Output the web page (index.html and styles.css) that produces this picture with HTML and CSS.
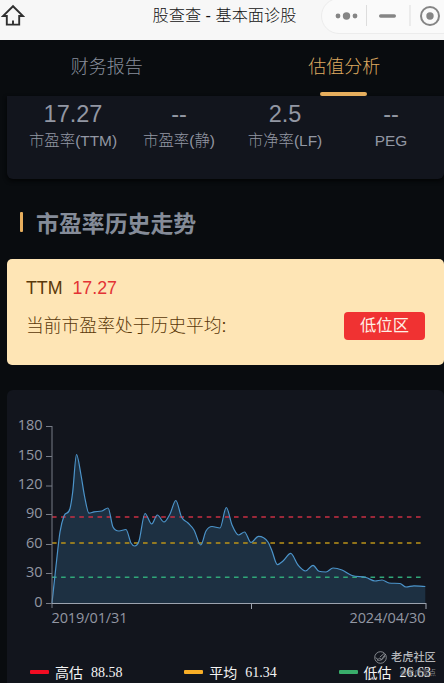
FILE: index.html
```
<!DOCTYPE html>
<html lang="zh-CN">
<head>
    <meta charset="UTF-8">
    <meta name="viewport" content="width=device-width, initial-scale=1.0">
    <title>股查查 - 基本面诊股</title>
    <link rel="stylesheet" href="styles.css">
</head>
<body>
    <header class="topbar">
        <svg class="home" width="24" height="24" viewBox="0 0 24 24">
            <path d="M12 2.2 L2 12 H5.8 V20.6 H18.2 V12 H22 Z M12 16.5 V20.5" />
        </svg>
        <h1>股查查 - 基本面诊股</h1>
        <div class="capsule">
            <svg width="122" height="36" viewBox="0 0 122 36">
                <g class="dots">
                    <circle cx="17" cy="17" r="2.4" />
                    <circle cx="25.5" cy="17" r="3.7" />
                    <circle cx="34" cy="17" r="2.4" />
                    <rect x="58" y="15.3" width="17" height="3.4" rx="1.7" />
                    <circle cx="109" cy="17" r="3.7" />
                </g>
                <path class="split" d="M45.5 6 V27 M89 6 V27" />
                <circle class="ring" cx="109" cy="17" r="9" />
            </svg>
        </div>
    </header>

    <nav class="tabs">
        <a href="#">财务报告</a>
        <a href="#" class="active">估值分析</a>
    </nav>

    <main>
        <section class="card stats">
            <div class="stat"><strong>17.27</strong><span>市盈率(TTM)</span></div>
            <div class="stat"><strong>--</strong><span>市盈率(静)</span></div>
            <div class="stat"><strong>2.5</strong><span>市净率(LF)</span></div>
            <div class="stat"><strong>--</strong><span>PEG</span></div>
        </section>

        <h2>市盈率历史走势</h2>

        <section class="notice">
            <p>TTM <span class="red">17.27</span></p>
            <div class="notice-row">
                <p>当前市盈率处于历史平均:</p>
                <span class="tag">低位区</span>
            </div>
        </section>

        <section class="card chart-card">
            <svg class="chart" width="437" height="250" viewBox="7 390 437 250">
                <path id="area" class="area" />
                <path class="high" d="M52 517 H425" />
                <path class="avg" d="M52 543 H425" />
                <path class="low" d="M52 577.2 H425" />
                <path id="line" class="line" />
                <path class="axis-y" d="M52 426 V608 M46 426.5 H52 M46 456.5 H52 M46 486 H52 M46 514.5 H52 M46 544.5 H52 M46 573.5 H52 M46 603.5 H52" />
                <path class="axis-x" d="M52 603.5 H426 M251.5 603 V609 M426 603 V609" />
                <g id="labels" class="labels"></g>
                <text class="date" x="51.5" y="623" textLength="76">2019/01/31</text>
                <text class="date" x="349.5" y="623" textLength="76">2024/04/30</text>
            </svg>
            <div class="legend">
                <div><i class="bar bar-high"></i>高估<b>88.58</b></div>
                <div><i class="bar bar-avg"></i>平均<b>61.34</b></div>
                <div><i class="bar bar-low"></i>低估<b>26.63</b></div>
            </div>
            <div class="watermark">
                <svg width="13" height="13" viewBox="0 0 13 13">
                    <circle cx="6.5" cy="6.5" r="5.8" />
                    <path d="M1.5 6.5 L4 8.5 L5.5 7 L7.5 8.5 L11.5 3 M3 9 Q8 10.5 11 5 M6 6 L10 2.5" />
                </svg>
                <span>老虎社区</span>
                <small>@老虎观点</small>
            </div>
        </section>
    </main>

    <script src="script.js"></script>
</body>
</html>
```
FILE: styles.css
```
* {
    box-sizing: border-box;
}

body {
    margin: 0;
    height: 683px;
    overflow: hidden;
    background: #090c0f;
    color: #9297a3;
    font-family: "Liberation Sans", "Noto Sans CJK SC", sans-serif;
    font-weight: 300;
}

h1, h2, p {
    margin: 0;
}

.topbar {
    position: relative;
    height: 40px;
    background: #f7f7f7;
    color: #111;
}

.home {
    position: absolute;
    left: 1px;
    top: 4px;
    fill: none;
    stroke: #303030;
    stroke-width: 1.9;
}

.topbar h1 {
    padding-left: 5px;
    font-size: 16.2px;
    font-weight: 300;
    line-height: 31px;
    text-align: center;
}

.capsule {
    position: absolute;
    left: 321px;
    top: -2px;
    width: 140px;
    height: 36px;
    border: 1px solid #ececec;
    border-radius: 18px;
    background: #fafafa;
}

.capsule svg {
    display: block;
    margin-left: -1px;
}

.dots {
    fill: #858585;
}

.split {
    stroke: #dddddd;
}

.ring {
    fill: none;
    stroke: #858585;
    stroke-width: 2;
}

.tabs {
    display: flex;
    height: 56px;
    margin: 0 -19px 0 -12px;
}

.tabs a {
    position: relative;
    flex: 1;
    color: #878e9b;
    font-size: 18px;
    line-height: 55px;
    text-align: center;
    text-decoration: none;
}

.tabs .active {
    color: #dfaa61;
}

.tabs .active::after {
    content: "";
    position: absolute;
    left: 50%;
    bottom: 0;
    width: 47px;
    height: 4px;
    margin-left: -24px;
    border-radius: 2px;
    background: #e6ae5d;
}

main {
    padding-left: 7px;
}

.card {
    background: #12151d;
    border-radius: 6px;
}

.stats {
    display: flex;
    height: 83px;
    padding: 5px 0 0 13px;
    border-radius: 0 0 6px 6px;
    box-shadow: 0 2px 4px #030405;
}

.stat {
    width: 106px;
    text-align: center;
}

.stat strong {
    display: block;
    font-size: 23.5px;
    font-weight: 400;
    line-height: 26px;
}

.stat span {
    display: block;
    font-size: 15.4px;
    line-height: 28px;
    white-space: nowrap;
}

h2 {
    display: flex;
    align-items: center;
    height: 80px;
    padding: 5px 0 0 13px;
    font-size: 22.9px;
    font-weight: 700;
    color: #858c99;
}

h2::before {
    content: "";
    width: 3px;
    height: 20px;
    margin-right: 13px;
    border-radius: 1px;
    background: #e6ae5d;
}

.notice {
    height: 106px;
    padding: 14px 19px;
    border-radius: 5px;
    background: #fee5b5;
    color: #5a3809;
    font-size: 17.8px;
    line-height: 30px;
}

.red {
    margin-left: 5px;
    color: #e33334;
}

.notice-row {
    display: flex;
    justify-content: space-between;
    align-items: center;
    margin-top: 8px;
}

.tag {
    width: 81px;
    height: 28px;
    border-radius: 4px;
    background: #f03232;
    color: #fff0e6;
    font-size: 16.3px;
    font-weight: 400;
    line-height: 27px;
    text-align: center;
}

.chart-card {
    position: relative;
    height: 310px;
    margin-top: 25px;
}

.chart {
    display: block;
}

.area {
    fill: #1d3042;
}

.line {
    fill: none;
    stroke: #4c94ca;
    stroke-width: 1.2;
}

.high, .avg, .low {
    stroke-width: 1.4;
    stroke-dasharray: 4.6 4.5;
}

.high {
    stroke: #c92f43;
}

.avg {
    stroke: #bb9218;
}

.low {
    stroke: #30a779;
}

.axis-y, .axis-x {
    fill: none;
    stroke: #777c87;
}

.axis-x {
    stroke: #9ca3af;
}

.labels, .date {
    fill: #9297a3;
    font-family: "Open Sans", "Noto Sans", sans-serif;
    font-size: 14.5px;
    font-weight: 400;
}

.labels {
    text-anchor: end;
}

.legend {
    display: flex;
    justify-content: space-between;
    padding: 22px 13px 0 23px;
    color: #f4f4f4;
    font-size: 14px;
    font-weight: 400;
    line-height: 22px;
}

.legend div {
    display: flex;
    align-items: center;
}

.legend b {
    margin-left: 8px;
    font-family: "Liberation Serif", serif;
    font-weight: 400;
}

.bar {
    width: 19px;
    height: 4px;
    margin: -2px 6px 0 0;
    border-radius: 1px;
}

.bar-high {
    background: #f20c22;
}

.bar-avg {
    background: #f8ae27;
}

.bar-low {
    background: #39ad6b;
}

/* community mark over the legend */
.watermark {
    position: absolute;
    right: 8px;
    top: 260px;
    display: grid;
    grid-template-columns: 13px 45px;
    column-gap: 4px;
    align-items: center;
    color: #b5b7bb;
    font-size: 11.2px;
    font-weight: 500;
    line-height: 15px;
    white-space: nowrap;
}

.watermark svg {
    fill: none;
    stroke: #a0a3a8;
    stroke-width: 0.8;
}

.watermark small {
    grid-column: 1 / 3;
    font-size: 7.2px;
    font-weight: 400;
    text-align: right;
    color: #85888e;
}
```
FILE: script.js
```
const points = [
    [52, 603], [56, 566], [60, 532], [64, 516], [70, 508.5], [72.7, 492],
    [76.5, 454.5], [81, 475], [84.5, 496], [89, 513.2], [94, 511.8], [102, 511],
    [108, 508], [113, 527], [119, 531], [126, 529.5], [131, 543], [134.7, 546],
    [139, 541], [145, 513.5], [151.7, 524], [157.3, 515], [164, 522], [170, 514],
    [175.8, 500.5], [181.5, 517], [188, 523], [194, 530], [200.8, 545], [206, 531],
    [212, 526.5], [220, 528], [226.3, 507.5], [232, 525], [238.5, 535], [244.5, 532],
    [251, 542.5], [258.5, 536.3], [268, 542], [272, 551], [277.4, 564.6], [283, 561],
    [290.7, 553.4], [298, 565], [305.5, 571], [313, 565.3], [319, 571.3], [326, 572],
    [333, 568], [342, 570], [352, 575.5], [366, 577.5], [375, 581], [382, 580],
    [389, 583], [400, 583.5], [406, 587], [414, 585.8], [425.3, 586.5]
];

// slope at each point, flat on the peaks and valleys
const slopes = points.map((p, i) => {
    if (i === 0 || i === points.length - 1) return 0;
    const a = (p[1] - points[i - 1][1]) / (p[0] - points[i - 1][0]);
    const b = (points[i + 1][1] - p[1]) / (points[i + 1][0] - p[0]);
    if (a * b <= 0) return 0;
    return Math.sign(a) * Math.min(Math.abs(a + b) / 2, 3 * Math.abs(a), 3 * Math.abs(b));
});
slopes[0] = -9.2;

let d = `M${points[0]}`;
for (let i = 1; i < points.length; i++) {
    const [x0, y0] = points[i - 1];
    const [x1, y1] = points[i];
    const h = (x1 - x0) / 3;
    d += ` C${x0 + h},${y0 + slopes[i - 1] * h} ${x1 - h},${y1 - slopes[i] * h} ${x1},${y1}`;
}
document.getElementById('line').setAttribute('d', d);
document.getElementById('area').setAttribute('d', d + ' V603 H52 Z');

// y axis labels
const labels = [[180, 430], [150, 460], [120, 489], [90, 518], [60, 548], [30, 577], [0, 607]];
document.getElementById('labels').innerHTML = labels
    .map(([value, y]) => `<text x="42.5" y="${y}">${value}</text>`)
    .join('');
```
